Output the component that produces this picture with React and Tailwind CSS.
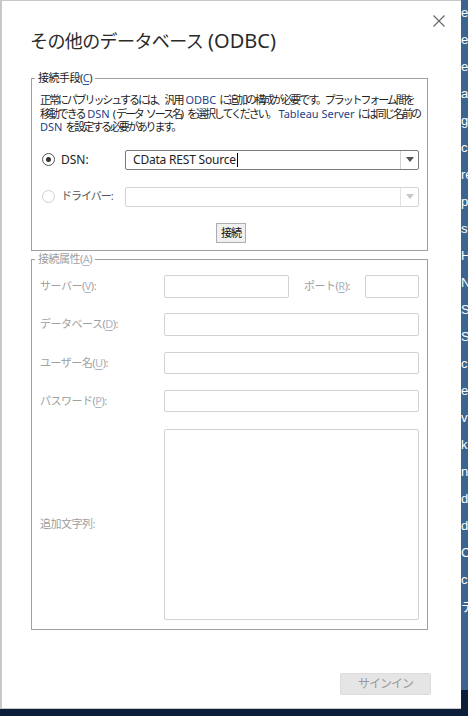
import React from 'react'

const jp = { fontFamily: '"Noto Sans", "Noto Sans CJK JP", sans-serif' }

const stripText = ['e', 'e', 'e', 'a', 'gr', 'co', 're', 'ple', 'sf', 'H', 'N', 'S', 'S', 'c', 'el', 'vf', 'k', 'nk', 'da', 'da', 'C', 'ca', 'テ']

function Key({ k, dim }) {
  return (
    <>
      (<span className={`underline underline-offset-2 ${dim ? 'text-[#a9b5c9]' : 'text-[#2f55a0]'}`}>{k}</span>)
    </>
  )
}

// latin word inside the compressed japanese paragraph, with its own spacing
function W({ children, blue = true }) {
  return <span className={`tracking-normal mx-[3px] ${blue ? 'text-[#1d3f8a]' : ''}`}>{children}</span>
}

function Combo({ value, disabled }) {
  return (
    <div className={`flex items-stretch w-[294px] h-[20px] bg-white border rounded-[2px] ${disabled ? 'border-[#d4d4d4]' : 'border-[#7a7a7a]'}`}>
      <div className="flex-1 flex items-center pl-[7px] text-[12px] text-[#222] tracking-[-0.2px]">
        {value}
        {value && <span className="w-px h-[14px] bg-black ml-px" />}
      </div>
      <div className={`w-[18px] flex items-center justify-center border-l ${disabled ? 'border-[#e3e3e3]' : 'border-[#d0d0d0]'}`}>
        <svg width="8" height="5" viewBox="0 0 8 5">
          <path d="M0 0h8L4 5z" fill={disabled ? '#c8c8c8' : '#555'} />
        </svg>
      </div>
    </div>
  )
}

function Radio({ checked, disabled }) {
  return (
    <div className={`w-[13px] h-[13px] rounded-full border flex items-center justify-center ${disabled ? 'border-[#cfcfcf]' : 'border-[#555]'}`}>
      {checked && <div className="w-[5px] h-[5px] rounded-full bg-[#333]" />}
    </div>
  )
}

function Field({ label, k, h = 'h-[23px]', mt }) {
  return (
    <div className={`flex items-center ${mt}`}>
      <div className="w-[124px] text-[11px] text-[#a0a0a0] tracking-[-0.5px]">
        {label}<Key k={k} dim />:
      </div>
      <div className={`w-[255px] ${h} border border-[#d2d2d2] rounded-[2px]`} />
    </div>
  )
}

export default function App() {
  return (
    <div className="w-[468px] h-[716px] bg-[#0b1e3a] overflow-hidden" style={jp}>
      <div className="flex items-start">
        {/* Dialog */}
        <div className="relative w-[461px] h-[709px] bg-white border-l-2 border-t border-b border-[#c8c8c8] flex flex-col">
          <svg className="absolute right-[16px] top-[14px]" width="12" height="12" viewBox="0 0 12 12">
            <path d="M0.5 0.5l11 11M11.5 0.5l-11 11" stroke="#666" strokeWidth="1.1" />
          </svg>

          <h1 className="mt-[30px] ml-[28px] text-[#2a2a2a] font-normal leading-none flex items-baseline">
            <span className="text-[18px] tracking-[-0.6px]">その他のデータベース</span>
            <span className="text-[20px] ml-[5px]">(ODBC)</span>
          </h1>

          {/* 接続手段 */}
          <div className="relative mt-[27px] ml-[29px] w-[397px] h-[173px] border border-[#a0a0a0] pl-[8px] pt-[14px]">
            <div className="absolute -top-[8px] left-[3px] bg-white px-[3px] text-[11px] text-[#222] tracking-[-0.5px] leading-[14px]">
              接続手段<Key k="C" />
            </div>
            <p className="text-[11px] leading-[13.5px] text-[#222] tracking-[-2.1px] whitespace-nowrap">
              正常にパブリッシュするには、汎用<W>ODBC</W>に追加の構成が必要です。プラットフォーム間を<br />
              移動できる<W>DSN</W><span className="tracking-normal">(</span>データ<span className="inline-block w-[3px]" />ソース名<span className="tracking-normal mr-[3px]">)</span>を選択してください。<W>Tableau Server</W>には同じ名前の<br />
              <span className="tracking-normal text-[#1d3f8a] mr-[3px]">DSN</span>を設定する必要があります。
            </p>
            <div className="flex items-center mt-[16px]">
              <div className="w-[85px] flex items-center pl-[2px] gap-[6px]">
                <Radio checked />
                <span className="text-[12px] text-[#222]">DSN:</span>
              </div>
              <Combo value="CData REST Source" />
            </div>
            <div className="flex items-center mt-[17px]">
              <div className="w-[85px] flex items-center pl-[2px] gap-[6px]">
                <Radio disabled />
                <span className="text-[11px] text-[#555] tracking-[-1px]">ドライバー:</span>
              </div>
              <Combo disabled />
            </div>
            <div className="flex justify-center mt-[16px] pr-[5px]">
              <button className="w-[30px] h-[20px] border border-[#adadad] bg-[#f0f0f0] text-[11px] text-[#111] tracking-[-1px] leading-none">
                接続
              </button>
            </div>
          </div>

          {/* 接続属性 */}
          <div className="relative mt-[8px] ml-[29px] w-[397px] h-[371px] border border-[#a0a0a0] pl-[8px] pt-[15px]">
            <div className="absolute -top-[8px] left-[3px] bg-white px-[3px] text-[11px] text-[#a0a0a0] tracking-[-0.5px] leading-[14px]">
              接続属性<Key k="A" dim />
            </div>
            <div className="flex items-center">
              <div className="w-[124px] text-[11px] text-[#a0a0a0] tracking-[-0.5px]">
                サーバー<Key k="V" dim />:
              </div>
              <div className="w-[125px] h-[23px] border border-[#d2d2d2] rounded-[2px]" />
              <div className="w-[76px] pl-[15px] text-[11px] text-[#a0a0a0] tracking-[-0.5px]">
                ポート<Key k="R" dim />:
              </div>
              <div className="w-[54px] h-[23px] border border-[#d2d2d2] rounded-[2px]" />
            </div>
            <Field label="データベース" k="D" mt="mt-[15px]" />
            <Field label="ユーザー名" k="U" h="h-[22px]" mt="mt-[16px]" />
            <Field label="パスワード" k="P" h="h-[22px]" mt="mt-[16px]" />
            <div className="flex items-center mt-[17px]">
              <div className="w-[124px] text-[11px] text-[#a0a0a0] tracking-[-0.5px]">追加文字列:</div>
              <div className="w-[255px] h-[191px] border border-[#d2d2d2] rounded-[2px]" />
            </div>
          </div>

          <div className="flex justify-end mt-[43px] pr-[30px]">
            <button className="w-[91px] h-[22px] bg-[#e5e5e5] border border-[#dcdcdc] rounded-[2px] text-[12px] text-[#9a9a9a] tracking-[-1px]">
              サインイン
            </button>
          </div>
        </div>

        {/* Background window strip */}
        <div className="flex-1 h-[690px] bg-[#3b6591] overflow-hidden pt-[4px]" style={{ fontFamily: '"Liberation Sans", "Noto Sans CJK JP", sans-serif' }}>
          {stripText.map((t, i) => (
            <div key={i} className="h-[27px] text-[13px] leading-[18px] text-white whitespace-nowrap">{t}</div>
          ))}
        </div>
      </div>
    </div>
  )
}
